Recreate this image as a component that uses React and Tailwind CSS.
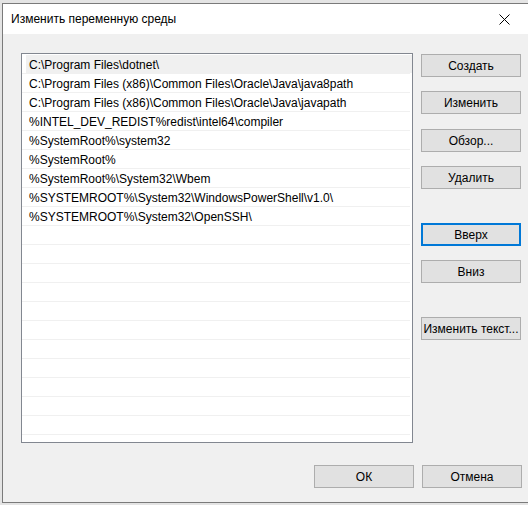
import React from "react";

const paths = [
  "C:\\Program Files\\dotnet\\",
  "C:\\Program Files (x86)\\Common Files\\Oracle\\Java\\java8path",
  "C:\\Program Files (x86)\\Common Files\\Oracle\\Java\\javapath",
  "%INTEL_DEV_REDIST%redist\\intel64\\compiler",
  "%SystemRoot%\\system32",
  "%SystemRoot%",
  "%SystemRoot%\\System32\\Wbem",
  "%SYSTEMROOT%\\System32\\WindowsPowerShell\\v1.0\\",
  "%SYSTEMROOT%\\System32\\OpenSSH\\",
];

const rows = [...paths, ...Array(11).fill("")];

function Btn({ children, focused, className = "" }) {
  return (
    <button
      className={
        "w-[100px] h-[23px] bg-[#e1e1e1] text-[12px] text-black leading-none flex items-center justify-center " +
        (focused ? "border-2 border-[#0078d7] " : "border border-[#adadad] ") +
        className
      }
    >
      {children}
    </button>
  );
}

export default function App() {
  return (
    <div
      className="w-[528px] h-[505px] bg-[#e4e4e4] pt-[3px] pl-[2px] overflow-hidden"
      style={{ fontFamily: '"Segoe UI", "Liberation Sans", Arial, sans-serif' }}
    >
      <div className="w-[530px] border border-[#7a7a7a] bg-[#f0f0f0]">
        {/* заголовок */}
        <div className="h-[30px] bg-white flex items-center justify-between pl-[8px] pr-[21px]">
          <span className="text-[12px] text-black">Изменить переменную среды</span>
          <svg width="11" height="11" viewBox="0 0 11 11">
            <path d="M0.5 0.5 L10.5 10.5 M10.5 0.5 L0.5 10.5" stroke="#000" strokeWidth="1" />
          </svg>
        </div>

        <div className="pl-[18px] pt-[19px] pb-[14px] relative">
          <div className="flex gap-[8px]">
            {/* список */}
            <div className="w-[392px] h-[390px] bg-white border border-[#828790] pt-[1px] overflow-hidden">
              {rows.map((r, i) => (
                <div key={i} className="h-[19px]">
                  <div
                    className={
                      "h-[18px] ml-[4px] pl-[3px] text-[12px] text-black leading-[20px] whitespace-nowrap " +
                      (i === 0 ? "bg-[#f0f0f0]" : "")
                    }
                  >
                    {r}
                  </div>
                  <div className="h-[1px] mr-[2px] bg-[#f0f0f0]" />
                </div>
              ))}
            </div>

            {/* кнопки */}
            <div className="flex flex-col pt-[1px]">
              <Btn>Создать</Btn>
              <Btn className="mt-[14px]">Изменить</Btn>
              <Btn className="mt-[15px]">Обзор...</Btn>
              <Btn className="mt-[14px]">Удалить</Btn>
              <Btn focused className="mt-[34px]">Вверх</Btn>
              <Btn className="mt-[14px]">Вниз</Btn>
              <Btn className="mt-[34px]">Изменить текст...</Btn>
            </div>
          </div>

          <div className="flex gap-[8px] mt-[22px] pl-[293px]">
            <Btn>ОК</Btn>
            <Btn>Отмена</Btn>
          </div>

          {/* уголок */}
          <svg className="absolute right-[-20px] bottom-[2px]" width="12" height="12" viewBox="0 0 12 12">
            <rect x="9" y="1" width="2" height="2" fill="#bcbcbc" />
            <rect x="6" y="4" width="2" height="2" fill="#bcbcbc" />
            <rect x="9" y="4" width="2" height="2" fill="#bcbcbc" />
            <rect x="3" y="7" width="2" height="2" fill="#bcbcbc" />
            <rect x="6" y="7" width="2" height="2" fill="#bcbcbc" />
            <rect x="9" y="7" width="2" height="2" fill="#bcbcbc" />
          </svg>
        </div>
      </div>
    </div>
  );
}
